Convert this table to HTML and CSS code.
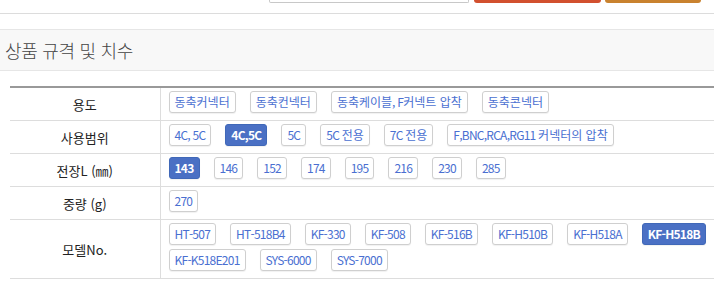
FILE: index.html
```html
<!DOCTYPE html>
<html lang="ko">
<head>
<meta charset="utf-8">
<link rel="stylesheet" href="styles.css">
</head>
<body>
<div class="topbar">
  <div class="search-input"></div>
  <div class="btn-red"></div>
  <div class="btn-orange"></div>
</div>
<div class="section-head">
  <h2 class="section-title">상품 규격 및 치수</h2>
</div>
<table class="spec">
  <tr>
    <th>용도</th>
    <td><div class="opts">
      <span class="opt"><span class="ko">동축커넥터</span></span>
      <span class="opt"><span class="ko">동축컨넥터</span></span>
      <span class="opt"><span class="ko">동축케이블</span>, F<span class="ko">커넥트 압착</span></span>
      <span class="opt"><span class="ko">동축콘넥터</span></span>
    </div></td>
  </tr>
  <tr>
    <th>사용범위</th>
    <td><div class="opts">
      <span class="opt">4C, 5C</span>
      <span class="opt active">4C,5C</span>
      <span class="opt">5C</span>
      <span class="opt">5C <span class="ko">전용</span></span>
      <span class="opt">7C <span class="ko">전용</span></span>
      <span class="opt">F,BNC,RCA,RG11 <span class="ko">커넥터의 압착</span></span>
    </div></td>
  </tr>
  <tr>
    <th>전장L (㎜)</th>
    <td><div class="opts">
      <span class="opt active">143</span>
      <span class="opt">146</span>
      <span class="opt">152</span>
      <span class="opt">174</span>
      <span class="opt">195</span>
      <span class="opt">216</span>
      <span class="opt">230</span>
      <span class="opt">285</span>
    </div></td>
  </tr>
  <tr>
    <th>중량 (g)</th>
    <td><div class="opts">
      <span class="opt">270</span>
    </div></td>
  </tr>
  <tr>
    <th>모델No.</th>
    <td><div class="opts">
      <span class="opt">HT-507</span>
      <span class="opt">HT-518B4</span>
      <span class="opt">KF-330</span>
      <span class="opt">KF-508</span>
      <span class="opt">KF-516B</span>
      <span class="opt">KF-H510B</span>
      <span class="opt">KF-H518A</span>
      <span class="opt active">KF-H518B</span>
      <span class="opt">KF-K518E201</span>
      <span class="opt">SYS-6000</span>
      <span class="opt">SYS-7000</span>
    </div></td>
  </tr>
</table>
</body>
</html>
```

FILE: styles.css
```css
* { box-sizing: border-box; }
html, body {
  margin: 0;
  padding: 0;
  background: #fff;
  overflow: hidden;
}
body {
  font-family: "Noto Sans CJK KR", "Noto Sans", sans-serif;
  color: #222;
  width: 714px;
}
.topbar {
  height: 14px;
  border-bottom: 1px solid #dcdcdc;
  display: flex;
  align-items: flex-start;
  padding-left: 269px;
  margin-bottom: 15px;
}
.search-input {
  width: 200px;
  height: 3px;
  border: 1px solid #c8c8c8;
  border-top: none;
  border-radius: 0 0 2px 2px;
}
.btn-red {
  width: 127px;
  height: 3px;
  margin-left: 5px;
  background: #d2502f;
  border-radius: 0 0 4px 4px;
}
.btn-orange {
  width: 96px;
  height: 3px;
  margin-left: 4px;
  background: #c9822f;
  border-radius: 0 0 4px 4px;
}
.section-head {
  background: #f8f8f8;
  border-top: 1px solid #e6e6e6;
  border-bottom: 1px solid #e6e6e6;
  height: 42px;
  display: flex;
  align-items: center;
  padding-left: 5px;
  margin-bottom: 15px;
}
.section-title {
  margin: 0;
  font-size: 18px;
  font-weight: 300;
  color: #444;
  letter-spacing: -0.3px;
}
.spec {
  border-collapse: collapse;
  margin-left: 10px;
  width: 704px;
  border-top: 2px solid #999;
}
.spec th {
  width: 150px;
  font-weight: 400;
  font-size: 13px;
  color: #222;
  text-align: center;
  border-right: 1px solid #ddd;
  border-bottom: 1px solid #ddd;
  padding: 0;
}
.spec td {
  border-bottom: 1px solid #ddd;
  padding: 3px 8px 3px 8px;
}
.opts {
  display: flex;
  flex-wrap: wrap;
  column-gap: 14px;
  row-gap: 4px;
  padding-bottom: 4px;
}
.opt {
  display: inline-block;
  height: 22px;
  line-height: 20px;
  padding: 0 5px;
  border: 1px solid #cfcfcf;
  border-radius: 3px;
  font-size: 12px;
  color: #4a6fd1;
  letter-spacing: -0.75px;
  background: #fff;
  box-shadow: 0 1px 1px rgba(0,0,0,0.06);
  white-space: nowrap;
}
.ko {
  letter-spacing: 0;
}
.opt.active {
  background: #4a70c4;
  border-color: #4068b8;
  color: #fff;
  font-weight: 700;
}
```
